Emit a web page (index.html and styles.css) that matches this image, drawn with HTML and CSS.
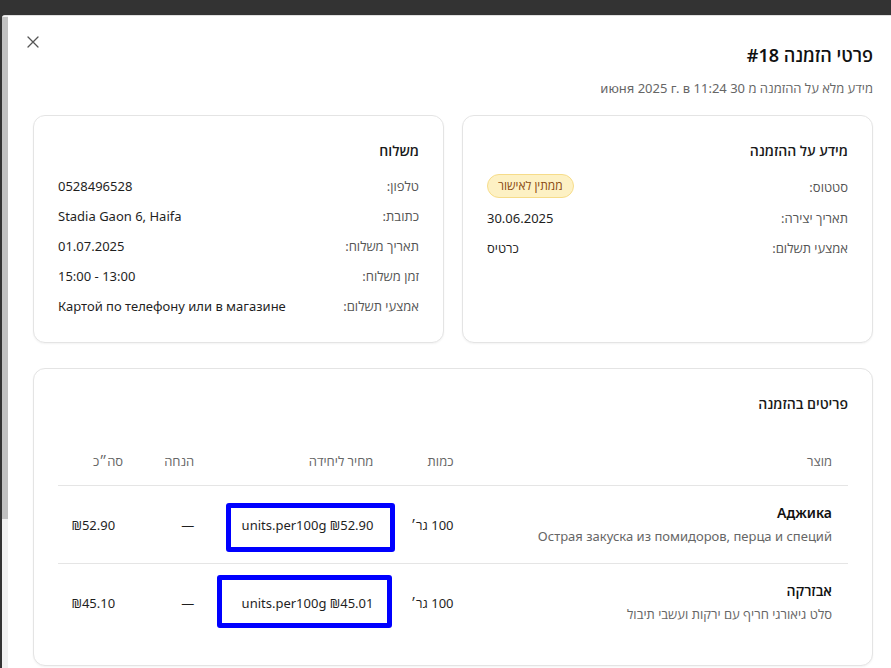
FILE: index.html
```html
<!DOCTYPE html>
<html lang="he">
<head>
<meta charset="utf-8">
<title>פרטי הזמנה #18</title>
<link rel="stylesheet" href="styles.css">
</head>
<body>
<div class="overlay">
  <div class="modal">
    <div class="scrollbar"><div class="thumb"></div></div>
    <div class="content" dir="rtl">
      <button class="close" aria-label="סגור">
        <svg width="12" height="12" viewBox="0 0 12 12"><path d="M1 1L11 11M11 1L1 11" stroke="#555" stroke-width="1.3" stroke-linecap="round"/></svg>
      </button>
      <h1 class="title">פרטי הזמנה #18</h1>
      <p class="subtitle">מידע מלא על ההזמנה מ 30 июня 2025 г. в 11:24</p>

      <div class="cards">
        <section class="card">
          <h2 class="card-title">מידע על ההזמנה</h2>
          <div class="rows">
            <div class="row"><span class="label">סטטוס:</span><span class="badge">ממתין לאישור</span></div>
            <div class="row"><span class="label">תאריך יצירה:</span><span class="value">30.06.2025</span></div>
            <div class="row"><span class="label">אמצעי תשלום:</span><span class="value">כרטיס</span></div>
          </div>
        </section>
        <section class="card">
          <h2 class="card-title">משלוח</h2>
          <div class="rows">
            <div class="row"><span class="label">טלפון:</span><span class="value">0528496528</span></div>
            <div class="row"><span class="label">כתובת:</span><span class="value">Stadia Gaon 6, Haifa</span></div>
            <div class="row"><span class="label">תאריך משלוח:</span><span class="value">01.07.2025</span></div>
            <div class="row"><span class="label">זמן משלוח:</span><span class="value">13:00 - 15:00</span></div>
            <div class="row"><span class="label">אמצעי תשלום:</span><span class="value">Картой по телефону или в магазине</span></div>
          </div>
        </section>
      </div>

      <section class="card items">
        <h2 class="card-title items-title">פריטים בהזמנה</h2>
        <table class="table">
          <colgroup>
            <col class="c-product"><col class="c-qty"><col class="c-price"><col class="c-disc"><col class="c-total">
          </colgroup>
          <thead>
            <tr><th>מוצר</th><th>כמות</th><th>מחיר ליחידה</th><th>הנחה</th><th>סה״כ</th></tr>
          </thead>
          <tbody>
            <tr>
              <td><div class="pname">Аджика</div><div class="pdesc">Острая закуска из помидоров, перца и специй</div></td>
              <td>100 גר׳</td>
              <td><span class="mark mark-1">₪52.90 units.per100g</span></td>
              <td>—</td>
              <td class="total">₪52.90</td>
            </tr>
            <tr>
              <td><div class="pname">אבזרקה</div><div class="pdesc">סלט גיאורגי חריף עם ירקות ועשבי תיבול</div></td>
              <td>100 גר׳</td>
              <td><span class="mark mark-2">₪45.01 units.per100g</span></td>
              <td>—</td>
              <td class="total">₪45.10</td>
            </tr>
          </tbody>
        </table>
      </section>
    </div>
  </div>
</div>
</body>
</html>
```
FILE: styles.css
```css
*, *::before, *::after { box-sizing: border-box; }
html, body { margin: 0; padding: 0; height: 100%; }
body {
  background: #333333;
  overflow: hidden;
  font-family: "Noto Sans", "Open Sans", "Liberation Sans", sans-serif;
  color: #1f1f1f;
}
.overlay {
  padding: 15px 0 0 2px;
  height: 100%;
}
.modal {
  width: 896px;
  height: 653px;
  background: #ffffff;
  display: flex;
  border-top: 1px solid #e0e0e0;
  border-top-left-radius: 3px;
  overflow: hidden;
}
.scrollbar {
  width: 6px;
  flex: none;
  background: #f1f1f1;
  padding-top: 1px;
}
.thumb {
  height: 502px;
  background: #c1c1c1;
}
.content {
  position: relative;
  flex: 1;
  padding: 25px 25px 0 25px;
}
.close {
  position: absolute;
  left: 18px;
  top: 19px;
  width: 14px;
  height: 14px;
  padding: 1px;
  border: 0;
  background: transparent;
  display: flex;
  align-items: center;
  justify-content: center;
}
.title {
  margin: 0;
  font-size: 18px;
  line-height: 28px;
  font-weight: 600;
  color: #111;
}
.subtitle {
  margin: 9px 0 0;
  font-size: 13px;
  line-height: 20px;
  color: #666;
}
.cards {
  margin-top: 17px;
  display: grid;
  grid-template-columns: 1fr 1fr;
  gap: 18px;
}
.card {
  border: 1px solid #e4e4e4;
  border-radius: 12px;
  background: #fff;
  box-shadow: 0 1px 2px rgba(0,0,0,0.05);
  padding: 25px 24px 26px;
}
.card-title {
  margin: 0 0 15px;
  font-size: 14px;
  line-height: 20px;
  font-weight: 600;
  color: #1a1a1a;
}
.rows {
  display: flex;
  flex-direction: column;
  gap: 10px;
}
.row {
  display: flex;
  justify-content: space-between;
  align-items: center;
  min-height: 20px;
  font-size: 13px;
  line-height: 20px;
}
.label { color: #555; }
.value { color: #1f1f1f; }
.badge {
  display: inline-block;
  font-size: 12px;
  line-height: 22px;
  padding: 0 10px;
  border-radius: 999px;
  background: #fdf1c4;
  border: 1px solid #f6dc8a;
  color: #8a4a10;
  margin-top: -2px;
}
.items {
  margin-top: 25px;
  padding-bottom: 24px;
}
.items-title { margin-bottom: 21px; }
.table {
  width: 100%;
  border-collapse: collapse;
  table-layout: fixed;
  font-size: 13px;
  line-height: 20px;
}
.c-product { width: 378px; }
.c-qty { width: 80px; }
.c-price { width: 179px; }
.c-disc { width: 71px; }
.c-total { width: 81px; }
.table th {
  text-align: right;
  font-weight: 400;
  color: #666;
  padding: 16px 16px 14px;
  border-bottom: 1px solid #e5e5e5;
}
.table td {
  text-align: right;
  padding: 17px 16px;
  vertical-align: middle;
  color: #1f1f1f;
}
.table td.total { padding-right: 24px; }
.table tbody tr:not(:last-child) td { border-bottom: 1px solid #e5e5e5; }
.pname {
  font-size: 14px;
  line-height: 20px;
  font-weight: 600;
  color: #111;
}
.pdesc {
  margin-top: 3px;
  font-size: 13px;
  line-height: 20px;
  color: #666;
}
.mark {
  position: relative;
  display: inline-block;
}
.mark::after {
  content: "";
  position: absolute;
  border: 5px solid #0000ff;
  border-radius: 3px;
}
.mark-1::after { right: -22px; width: 169px; top: -12px; bottom: -17px; }
.mark-2::after { right: -19px; width: 175px; top: -18px; bottom: -15px; }
```
